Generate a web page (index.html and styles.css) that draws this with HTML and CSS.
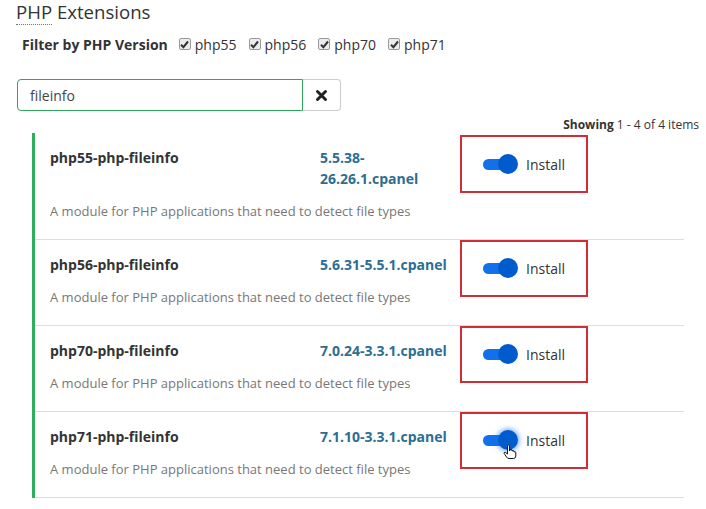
FILE: index.html
```html
<!DOCTYPE html>
<html>
<head>
    <title>PHP Extensions</title>
    <link rel="stylesheet" href="styles.css">
</head>
<body>
    <h3 class="pageTitle"><abbr title="PHP: Hypertext Preprocessor">PHP</abbr> Extensions</h3>

    <div class="filterRow">
        <span class="filterLabel">Filter by PHP Version</span>
        <label class="versionCheck"><span class="checkBox"><svg width="9" height="9" viewBox="0 0 9 9"><path d="M1 4.8 L3.4 7.2 L8 1.5" fill="none" stroke="#333" stroke-width="2"/></svg></span>php55</label>
        <label class="versionCheck"><span class="checkBox"><svg width="9" height="9" viewBox="0 0 9 9"><path d="M1 4.8 L3.4 7.2 L8 1.5" fill="none" stroke="#333" stroke-width="2"/></svg></span>php56</label>
        <label class="versionCheck"><span class="checkBox"><svg width="9" height="9" viewBox="0 0 9 9"><path d="M1 4.8 L3.4 7.2 L8 1.5" fill="none" stroke="#333" stroke-width="2"/></svg></span>php70</label>
        <label class="versionCheck"><span class="checkBox"><svg width="9" height="9" viewBox="0 0 9 9"><path d="M1 4.8 L3.4 7.2 L8 1.5" fill="none" stroke="#333" stroke-width="2"/></svg></span>php71</label>
    </div>

    <div class="searchGroup">
        <input class="searchInput" type="text" value="fileinfo">
        <button class="clearButton" title="Clear">
            <svg width="13" height="13" viewBox="0 0 13 13"><path d="M2.5 2.5 L10.5 10.5 M10.5 2.5 L2.5 10.5" stroke="#222" stroke-width="3" stroke-linecap="round"/></svg>
        </button>
    </div>

    <div class="pageInfo"><b>Showing</b> 1 - 4 of 4 items</div>

    <div class="extensionList">
        <div class="extensionRow firstRow">
            <div class="extensionInfo">
                <div class="extensionName">php55-php-fileinfo</div>
                <div class="extensionVersion">5.5.38-<br>26.26.1.cpanel</div>
                <div class="extensionDesc">A module for PHP applications that need to detect file types</div>
            </div>
            <div class="installBox">
                <span class="toggle"><span class="knob"></span></span>
                <span class="installText">Install</span>
            </div>
        </div>
        <div class="extensionRow">
            <div class="extensionInfo">
                <div class="extensionName">php56-php-fileinfo</div>
                <div class="extensionVersion">5.6.31-5.5.1.cpanel</div>
                <div class="extensionDesc">A module for PHP applications that need to detect file types</div>
            </div>
            <div class="installBox">
                <span class="toggle"><span class="knob"></span></span>
                <span class="installText">Install</span>
            </div>
        </div>
        <div class="extensionRow">
            <div class="extensionInfo">
                <div class="extensionName">php70-php-fileinfo</div>
                <div class="extensionVersion">7.0.24-3.3.1.cpanel</div>
                <div class="extensionDesc">A module for PHP applications that need to detect file types</div>
            </div>
            <div class="installBox">
                <span class="toggle"><span class="knob"></span></span>
                <span class="installText">Install</span>
            </div>
        </div>
        <div class="extensionRow">
            <div class="extensionInfo">
                <div class="extensionName">php71-php-fileinfo</div>
                <div class="extensionVersion">7.1.10-3.3.1.cpanel</div>
                <div class="extensionDesc">A module for PHP applications that need to detect file types</div>
            </div>
            <div class="installBox hovered">
                <span class="toggle"><span class="knob"></span></span>
                <span class="installText">Install</span>
                <svg class="handCursor" width="14" height="16" viewBox="0 0 14 16"><path d="M4.5 1.5 Q5.5 0.5 6.5 1.5 L6.5 7 L7 5.8 Q8 5 9 6 L9 7 Q10 6 11 7 L11 8 Q12 7.2 12.8 8.3 L12.8 12 Q12.8 14.5 10.5 14.5 L6 14.5 Q4.5 14.5 3.5 13 L1.2 9.5 Q0.8 8.2 2.2 8.3 L4.5 10 Z" fill="#fff" stroke="#111" stroke-width="1"/></svg>
            </div>
        </div>
    </div>
</body>
</html>
```

FILE: styles.css
```css
body {
    margin: 0;
    padding: 0 16px;
    font-family: "Open Sans", "Liberation Sans", sans-serif;
    color: #333;
    background-color: #fff;
}
.pageTitle {
    margin: 0;
    font-size: 18.6px;
    font-weight: normal;
    line-height: 24px;
}
.pageTitle abbr {
    text-decoration: none;
    border-bottom: 1px dotted #777;
}
.filterRow {
    display: flex;
    align-items: center;
    margin: 10px 0 0 6px;
    height: 20px;
}
.filterLabel {
    font-size: 14px;
    font-weight: bold;
    margin-right: 11px;
}
.versionCheck {
    display: flex;
    align-items: center;
    font-size: 14px;
    margin-right: 12px;
}
.checkBox {
    width: 12px;
    height: 12px;
    box-sizing: border-box;
    border: 1px solid #9a9a9a;
    border-radius: 2px;
    background-color: #ececec;
    display: flex;
    align-items: center;
    justify-content: center;
    margin-right: 4px;
}
.searchGroup {
    display: flex;
    margin: 25px 0 0 1px;
    height: 32px;
}
.searchInput {
    width: 286px;
    box-sizing: border-box;
    border: 1px solid #2fa65a;
    border-radius: 4px 0 0 4px;
    padding: 0 12px;
    font-family: "Open Sans", "Liberation Sans", sans-serif;
    font-size: 14px;
    color: #444;
    outline: none;
}
.clearButton {
    width: 38px;
    box-sizing: border-box;
    border: 1px solid #ccc;
    border-left: none;
    border-radius: 0 4px 4px 0;
    background-color: #fff;
    display: flex;
    align-items: center;
    justify-content: center;
    padding: 0;
}
.pageInfo {
    text-align: right;
    font-size: 12px;
    margin: 6px -9px 0 0;
    line-height: 16px;
}
.extensionList {
    margin: 0 0 0 16px;
    width: 649px;
    border-left: 3px solid #2fae5b;
}
.extensionRow {
    display: flex;
    border-bottom: 1px solid #ddd;
}
.extensionInfo {
    width: 409px;
    padding: 15px 0 18px 15px;
    display: grid;
    grid-template-columns: 270px 139px;
    row-gap: 12px;
}
.extensionName {
    font-size: 14px;
    font-weight: bold;
    line-height: 20px;
}
.extensionVersion {
    font-size: 14px;
    font-weight: bold;
    line-height: 20px;
    color: #2c6e92;
}
.firstRow .extensionVersion {
    line-height: 20.5px;
}
.extensionDesc {
    grid-column: 1 / 3;
    font-size: 13px;
    line-height: 20px;
    color: #777;
}
.installBox {
    position: relative;
    align-self: flex-start;
    margin: 0 0 0 1px;
    width: 128px;
    height: 57px;
    box-sizing: border-box;
    border: 2px solid #cf2e37;
    display: flex;
    align-items: center;
    padding-left: 21px;
}
.firstRow .installBox {
    margin-top: 2px;
    height: 58px;
}
.toggle {
    position: relative;
    width: 26px;
    height: 11px;
    border-radius: 6px;
    background-color: #1270ea;
    margin-right: 17px;
}
.knob {
    position: absolute;
    left: 15px;
    top: -5px;
    width: 20px;
    height: 20px;
    border-radius: 50%;
    background-color: #005ccc;
}
.hovered .knob {
    box-shadow: 0 0 4px 2px rgba(18, 112, 234, 0.45);
}
.installText {
    font-size: 14px;
    color: #333;
}
.handCursor {
    position: absolute;
    left: 41px;
    top: 30px;
}
```
